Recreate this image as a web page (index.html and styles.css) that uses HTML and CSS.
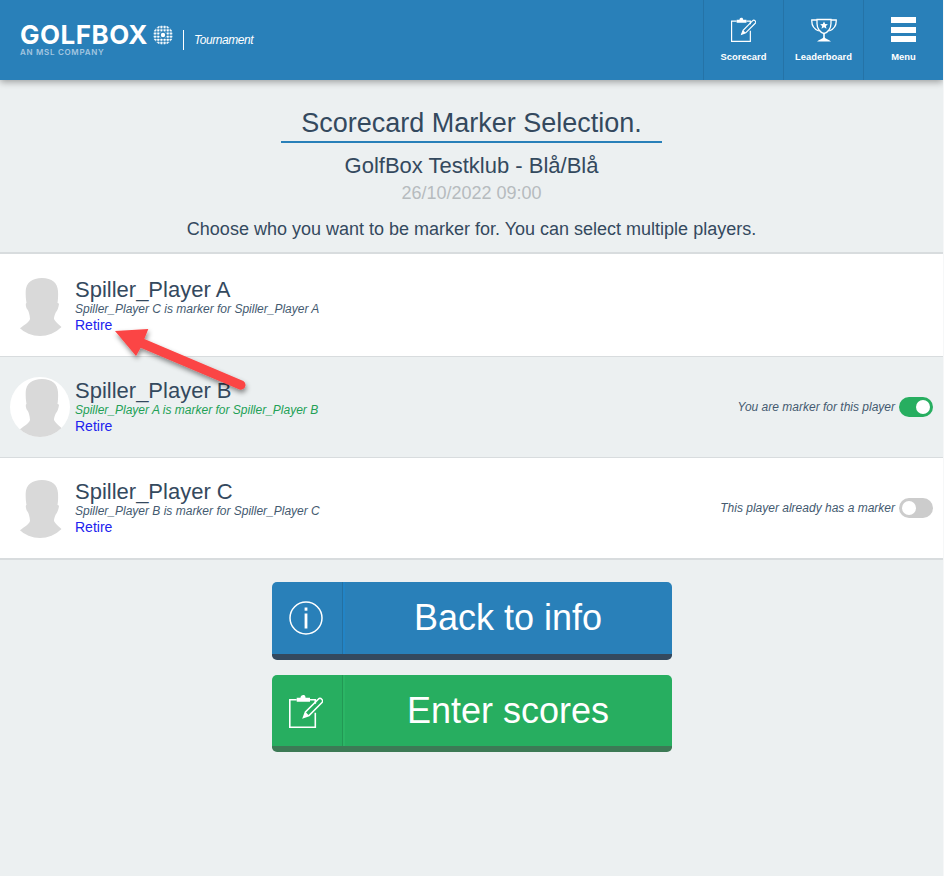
FILE: index.html
```html
<!DOCTYPE html>
<html lang="en">

<head>
    <meta charset="UTF-8">
    <meta name="viewport" content="width=device-width, initial-scale=1.0">
    <title>Scorecard Marker Selection</title>
    <link rel="stylesheet" href="styles.css">
</head>

<body>
    <svg class="defs" width="0" height="0">
        <symbol id="person" viewBox="0 0 60 60">
            <path d="M32 2C22 2 16 7 15.700 15c-.2 5 .3 9 .8 12-1 0-1 3 .5 6 1 1 1.500 2 2 4 .5 2 1 4 1 6-1 4-8 7-12 11l-3 2c7 4 17 4 27 4s20-1 24-5c-4-4-10-8-12-12 0-2 .5-4 2-7 1-1 2.500-4 3-8-.5-1-1-1-1.500-1 .5-3 .8-7 .5-12C47.500 7 42 2 32 2z" fill="#d9d9d9" />
        </symbol>
        <symbol id="clipboard" viewBox="0 0 34 34">
            <path d="M7.700 5.700H.8v27.500h25.500V18.700" fill="none" stroke="currentColor" stroke-width="1.600" />
            <path d="M21 5.700h5.300v4" fill="none" stroke="currentColor" stroke-width="1.600" />
            <path d="M7.700 3.700h3.800a2.700 2.700 0 0 1 3.700-2.600 2.700 2.700 0 0 1 1.300 2.600H21v4H7.700z" fill="currentColor" />
            <path d="M14.500 23.500l2-5.500L29.500 5a2 2 0 0 1 3 0l.5.500a2 2 0 0 1 0 3L20 21.500z" fill="none" stroke="currentColor" stroke-width="1.600" />
            <path d="M14.500 23.500l2-5.500 3.500 3.500z" fill="currentColor" />
        </symbol>
        <pattern id="dots" width="3.200" height="3.200" patternUnits="userSpaceOnUse" x=".4" y=".4">
            <rect x=".5" y=".5" width="2.200" height="2.200" rx=".5" fill="#fff" />
        </pattern>
        <clipPath id="globeClip">
            <circle cx="10" cy="10" r="10" />
        </clipPath>
    </svg>

    <header class="topbar">
        <div class="brand">
            <div class="logo">
                <div class="logo-main">
                    <span class="logo-name">GOLFBOX</span>
                    <svg class="globe" width="20" height="20" viewBox="0 0 20 20">
                        <rect width="20" height="20" fill="url(#dots)" clip-path="url(#globeClip)" />
                        <circle cx="10" cy="10" r="3.200" fill="#2980b9" />
                        <circle cx="10" cy="10" r="2.200" fill="#fff" />
                    </svg>
                </div>
                <span class="logo-sub">AN MSL COMPANY</span>
            </div>
            <span class="product">Tournament</span>
        </div>
        <nav class="topnav">
            <a class="navitem">
                <svg class="navicon" width="25" height="25"><use href="#clipboard" /></svg>
                <span>Scorecard</span>
            </a>
            <a class="navitem">
                <svg class="navicon" width="26" height="25" viewBox="0 0 26 25">
                    <path d="M6 2.500h14v4c0 5-3 9-7 10-4-1-7-5-7-10z" fill="none" stroke="currentColor" stroke-width="1.300" />
                    <path d="M6 3H.8c-.3 5 2 9 7 11M20 3h5.200c.3 5-2 9-7 11" fill="none" stroke="currentColor" stroke-width="1.300" />
                    <path d="M13 4.500l1.200 2.400 2.700.3-2 1.800.6 2.700-2.500-1.400-2.500 1.400.6-2.700-2-1.800 2.700-.3z" fill="currentColor" />
                    <rect x="12.200" y="16" width="1.600" height="5" fill="currentColor" />
                    <path d="M13 20c1.500 2 5 2.500 7 4.500H6c2-2 5.500-2.500 7-4.500z" fill="currentColor" />
                </svg>
                <span>Leaderboard</span>
            </a>
            <a class="navitem">
                <span class="burger"><i></i><i></i><i></i></span>
                <span>Menu</span>
            </a>
        </nav>
    </header>

    <main>
        <section class="intro">
            <h1>Scorecard Marker Selection.</h1>
            <h2>GolfBox Testklub - Blå/Blå</h2>
            <p class="date">26/10/2022 09:00</p>
            <p class="lead">Choose who you want to be marker for. You can select multiple players.</p>
        </section>

        <section class="players">
            <div class="player">
                <svg class="avatar" width="60" height="60"><use href="#person" /></svg>
                <div class="info">
                    <div class="name">Spiller_Player A</div>
                    <div class="marker">Spiller_Player C is marker for Spiller_Player A</div>
                    <a class="retire">Retire</a>
                </div>
            </div>
            <div class="player alt">
                <svg class="avatar" width="60" height="60"><use href="#person" /></svg>
                <div class="info">
                    <div class="name">Spiller_Player B</div>
                    <div class="marker ok">Spiller_Player A is marker for Spiller_Player B</div>
                    <a class="retire">Retire</a>
                </div>
                <div class="choice">
                    <span>You are marker for this player</span>
                    <span class="toggle on"></span>
                </div>
            </div>
            <div class="player">
                <svg class="avatar" width="60" height="60"><use href="#person" /></svg>
                <div class="info">
                    <div class="name">Spiller_Player C</div>
                    <div class="marker">Spiller_Player B is marker for Spiller_Player C</div>
                    <a class="retire">Retire</a>
                </div>
                <div class="choice">
                    <span>This player already has a marker</span>
                    <span class="toggle"></span>
                </div>
            </div>
        </section>

        <section class="actions">
            <a class="btn btn-blue">
                <span class="btn-icon">
                    <svg width="34" height="34" viewBox="0 0 34 34">
                        <circle cx="17" cy="17" r="16" fill="none" stroke="currentColor" stroke-width="1.500" />
                        <rect x="15.600" y="6.500" width="2.800" height="3.200" fill="currentColor" />
                        <rect x="15.600" y="12.500" width="2.800" height="15" fill="currentColor" />
                    </svg>
                </span>
                <span class="btn-text">Back to info</span>
            </a>
            <a class="btn btn-green">
                <span class="btn-icon">
                    <svg width="34" height="34"><use href="#clipboard" /></svg>
                </span>
                <span class="btn-text">Enter scores</span>
            </a>
        </section>
    </main>

    <!-- annotation arrow drawn over the screenshot -->
    <svg class="arrow" width="160" height="80" viewBox="0 0 160 80">
        <defs>
            <filter id="arrowShadow" x="-20%" y="-20%" width="140%" height="150%">
                <feDropShadow dx="1" dy="3" stdDeviation="2.500" flood-color="#000" flood-opacity=".45" />
            </filter>
        </defs>
        <path d="M15 11L48.300 9 44.300 19 143.300 61a4.500 4.500 0 0 1-5 8L40.700 27.700 36 36z" fill="#fb4444" filter="url(#arrowShadow)" />
    </svg>
</body>

</html>
```

FILE: styles.css
```css
* {
    box-sizing: border-box;
}

body {
    margin: 0;
    min-height: 100vh;
    background-color: #ecf0f1;
    border-right: 1px solid #f6f7f8;
    color: #34495e;
    font-family: "Liberation Sans", Arial, sans-serif;
}

.defs {
    position: absolute;
}

/* Top bar */
.topbar {
    height: 80px;
    display: flex;
    justify-content: space-between;
    background-color: #2980b9;
    color: #ffffff;
    box-shadow: 0 2px 7px rgba(0, 0, 0, 0.35);
}

.brand {
    display: flex;
    align-items: center;
    padding-left: 20px;
}

.logo {
    display: flex;
    flex-direction: column;
    margin-top: 2px;
}

.logo-main {
    display: flex;
    align-items: center;
    gap: 5px;
    height: 20px;
}

.logo-name {
    font-family: Inter, sans-serif;
    font-size: 26px;
    font-weight: 700;
    letter-spacing: 0.5px;
    line-height: 20px;
}

.logo-sub {
    margin-top: 2px;
    font-family: Inter, sans-serif;
    font-size: 8px;
    font-weight: 600;
    letter-spacing: 0.7px;
    line-height: 10px;
    color: #a3c6e0;
}

.product {
    margin-left: 10px;
    padding-left: 10px;
    height: 20px;
    line-height: 20px;
    border-left: 1px solid #ffffff;
    font-size: 12px;
    font-style: italic;
    letter-spacing: -0.45px;
}

.topnav {
    display: flex;
}

.navitem {
    width: 80px;
    display: flex;
    flex-direction: column;
    align-items: center;
    padding-top: 17px;
    border-left: 1px solid #2573a7;
    font-size: 9.400px;
    font-weight: 700;
    color: #ffffff;
}

.navicon {
    display: block;
    margin-bottom: 9px;
}

.burger {
    width: 25px;
    height: 25px;
    margin-bottom: 9px;
    display: flex;
    flex-direction: column;
    justify-content: space-between;
}

.burger i {
    display: block;
    height: 6px;
    background-color: #ffffff;
}

/* Heading */
.intro {
    text-align: center;
    padding-top: 26px;
}

h1 {
    width: 381px;
    margin: 0 auto;
    border-bottom: 2px solid #2980b9;
    font-size: 27px;
    font-weight: 400;
    line-height: 35px;
}

h2 {
    margin: 9px 0 0;
    font-size: 22px;
    font-weight: 400;
    line-height: 28px;
}

.date {
    margin: 3px 0 0;
    font-size: 18px;
    line-height: 20px;
    color: #b6bbbe;
}

.lead {
    margin: 14px 0 0;
    font-size: 18px;
    line-height: 24px;
}

/* Player rows */
.players {
    margin-top: 11px;
    padding-top: 2px;
    background-color: #ffffff;
    border-top: 2px solid #d8dcde;
    border-bottom: 2px solid #d8dcde;
}

.player {
    height: 101px;
    display: flex;
    align-items: flex-start;
    padding: 20px 10px 0;
    background-color: #ffffff;
    border-bottom: 1px solid #d8dcde;
}

.player:last-child {
    border-bottom: none;
    height: 100px;
}

.player.alt {
    background-color: #ecf0f1;
}

.avatar {
    flex: none;
    border-radius: 50%;
    background-color: #ffffff;
}

.info {
    margin: 1px 0 0 5px;
    flex: 1;
}

.name {
    font-size: 22px;
    line-height: 26px;
}

.marker {
    font-size: 12px;
    font-style: italic;
    line-height: 12px;
    color: #445a70;
}

.marker.ok {
    color: #22a055;
}

.retire {
    display: block;
    margin-top: 1px;
    font-size: 14px;
    line-height: 18px;
    color: #2222ee;
}

.choice {
    display: flex;
    align-items: center;
    gap: 4px;
    margin-top: 20px;
    font-size: 12px;
    font-style: italic;
    color: #445a70;
}

.toggle {
    position: relative;
    width: 34px;
    height: 20px;
    border-radius: 10px;
    background-color: #cccccc;
}

.toggle::after {
    content: "";
    position: absolute;
    top: 3px;
    left: 3px;
    width: 14px;
    height: 14px;
    border-radius: 50%;
    background-color: #ffffff;
}

.toggle.on {
    background-color: #27ae60;
}

.toggle.on::after {
    left: 17px;
}

/* Buttons */
.actions {
    display: flex;
    flex-direction: column;
    align-items: center;
    gap: 15px;
    margin-top: 22px;
}

.btn {
    width: 400px;
    height: 78px;
    display: flex;
    border-radius: 5px;
    color: #ffffff;
    overflow: hidden;
}

.btn-blue {
    background-color: #2980b9;
    border-bottom: 6px solid #34495e;
}

.btn-green {
    height: 77px;
    background-color: #27ae60;
    border-bottom: 6px solid #3c7a55;
}

.btn-icon {
    width: 71px;
    flex: none;
    display: flex;
    align-items: center;
    justify-content: center;
    padding-right: 2px;
    border-right: 1px solid rgba(0, 0, 0, 0.12);
}

.btn-text {
    flex: 1;
    display: flex;
    align-items: center;
    justify-content: center;
    font-size: 36px;
}

.btn-blue .btn-text {
    border-left: 2px solid #2284c6;
}

.btn-green .btn-text {
    border-left: 2px solid #2bb565;
}

/* Annotation */
.arrow {
    position: absolute;
    left: 100px;
    top: 320px;
}
```
